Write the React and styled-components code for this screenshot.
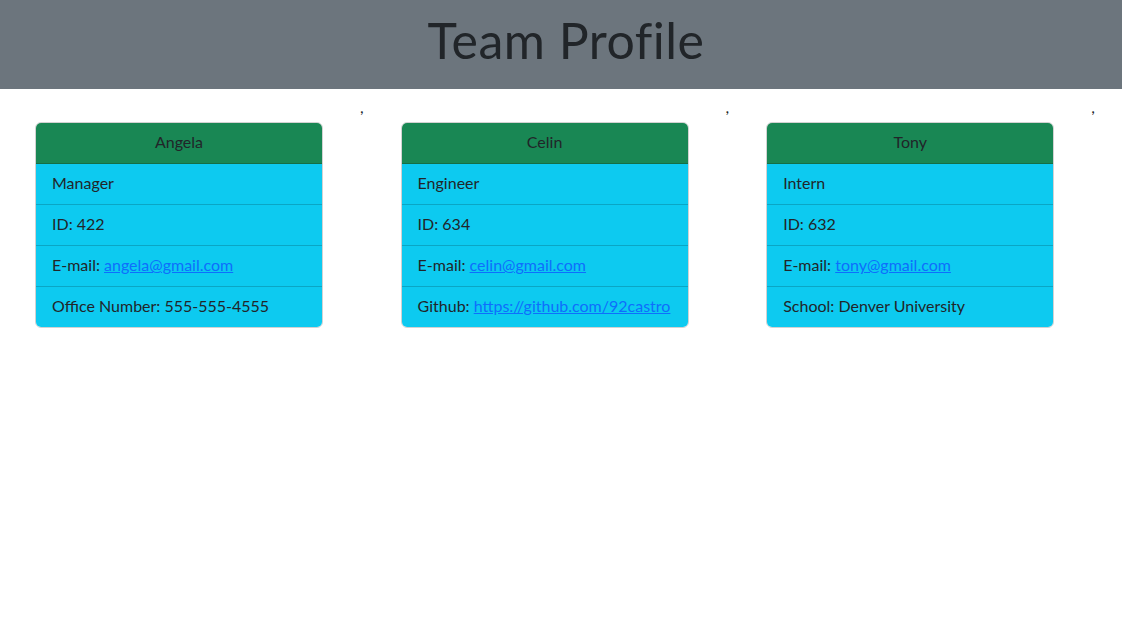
import React from 'react'
import styled, { createGlobalStyle } from 'styled-components'

const GlobalStyle = createGlobalStyle`
  body {
    margin: 0;
    background: #fff;
    font-family: Lato, "Noto Sans", sans-serif;
    color: #212529;
  }
`

const Banner = styled.header`
  height: 89px;
  box-sizing: border-box;
  padding-bottom: 9px;
  background: #6c757d;
  display: flex;
  align-items: center;
  justify-content: center;
`
const Title = styled.h1`
  margin: 0;
  padding-left: 10px;
  font-size: 50px;
  font-weight: 400;
  letter-spacing: 0.5px;
  color: #212529;
`

const Row = styled.main`
  display: flex;
  align-items: flex-start;
  padding-top: 6px;
`
const Card = styled.section`
  width: 288px;
  box-sizing: border-box;
  margin: 27px 37px 0 35px;
  border: 1px solid rgba(0, 0, 0, 0.175);
  border-radius: 6px;
  overflow: hidden;
  font-size: 16px;
  line-height: 24px;
`
const CardHead = styled.div`
  padding: 7px 16px 9px;
  background: #198754;
  text-align: center;
  border-bottom: 1px solid rgba(0, 0, 0, 0.175);
`
const Item = styled.div`
  padding: 7px 16px 9px;
  background: #0dcaf0;
  border-bottom: 1px solid rgba(0, 0, 0, 0.175);
  white-space: nowrap;

  &:last-child {
    border-bottom: 0;
  }
`
const Link = styled.a`
  color: #0d6efd;
  text-decoration: underline;
`
const Sep = styled.span`
  width: 5.6px;
  font-size: 16px;
  line-height: 24px;
`

const team = [
  {
    name: 'Angela',
    role: 'Manager',
    id: 422,
    email: 'angela@gmail.com',
    extra: <>Office Number: 555-555-4555</>,
  },
  {
    name: 'Celin',
    role: 'Engineer',
    id: 634,
    email: 'celin@gmail.com',
    extra: (
      <>
        Github: <Link href="#">https://github.com/92castro</Link>
      </>
    ),
  },
  {
    name: 'Tony',
    role: 'Intern',
    id: 632,
    email: 'tony@gmail.com',
    extra: <>School: Denver University</>,
  },
]

const App = () => {
  return (
    <>
      <GlobalStyle />
      <Banner>
        <Title>Team Profile</Title>
      </Banner>
      <Row>
        {team.map((m) => (
          <React.Fragment key={m.id}>
            <Card>
              <CardHead>{m.name}</CardHead>
              <Item>{m.role}</Item>
              <Item>ID: {m.id}</Item>
              <Item>
                E-mail: <Link href={`mailto:${m.email}`}>{m.email}</Link>
              </Item>
              <Item>{m.extra}</Item>
            </Card>
            <Sep>,</Sep>
          </React.Fragment>
        ))}
      </Row>
    </>
  )
}

export default App
